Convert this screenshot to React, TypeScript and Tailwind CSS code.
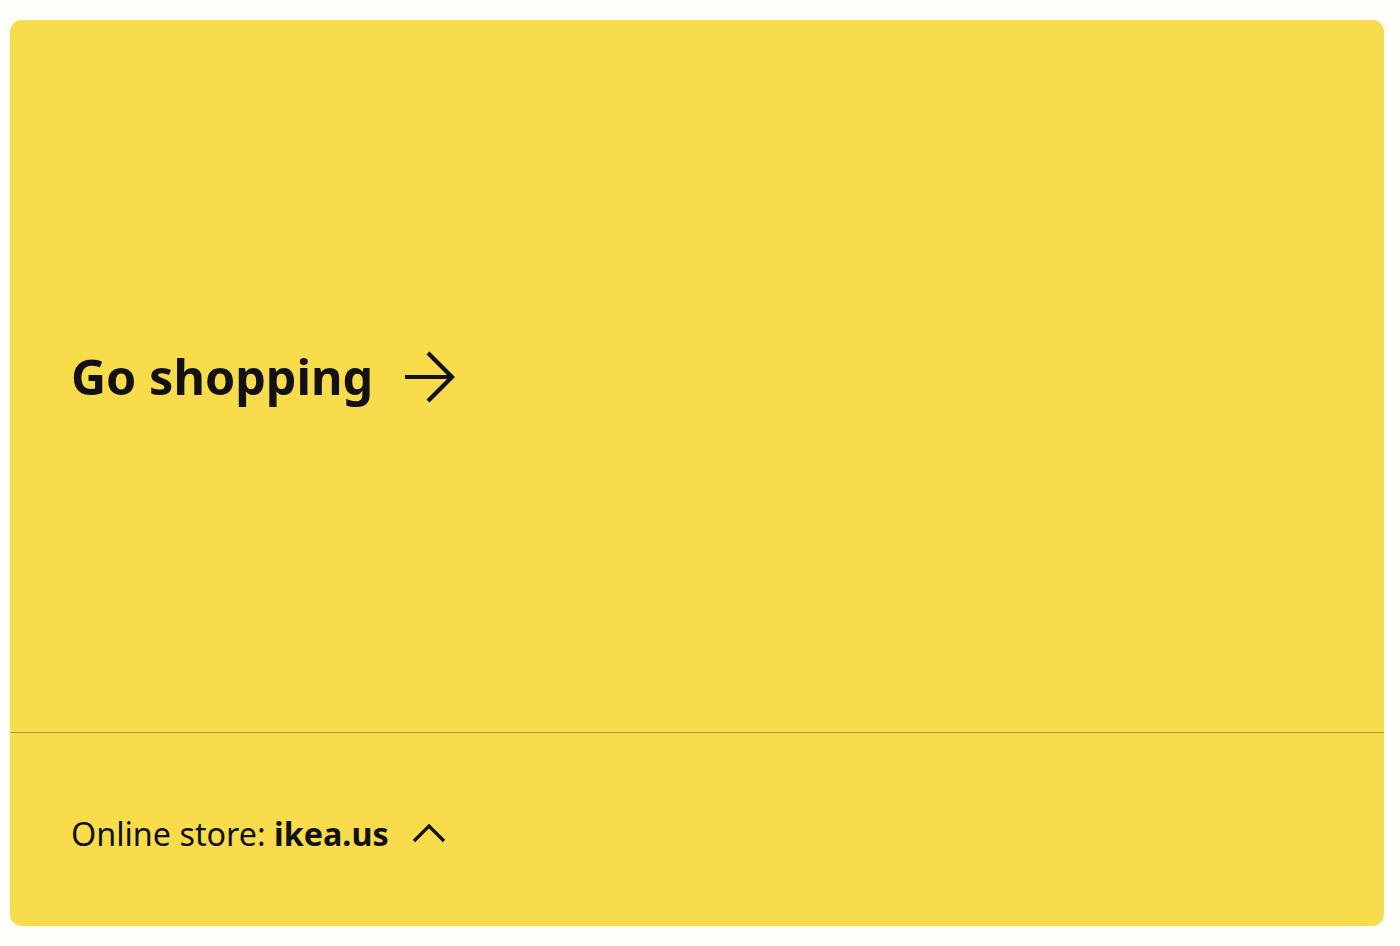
export default function App() {
  return (
    <div className="min-h-screen bg-[#fffefa] px-[10px] pt-[20px] pb-[20px] font-['Noto_Sans',sans-serif] text-[#111111]">
      <div className="flex h-[906px] w-[1374px] flex-col overflow-hidden rounded-[12px] bg-[#f8dc4b]">
        <a href="#" className="flex h-[713px] items-center gap-[31px] border-b border-[#a99a3e] pl-[61px]">
          <span className="text-[48.5px] font-bold leading-none">Go shopping</span>
          <svg width="52" height="52" viewBox="0 0 52 52" fill="none" stroke="currentColor" strokeWidth="4.2" className="mt-[2px]">
            <path d="M1 26h48" />
            <path d="M24 2l24 24-24 24" />
          </svg>
        </a>
        <div className="flex items-center gap-[23px] pl-[61px] pt-[84px]">
          <span className="text-[32.3px] leading-none">
            Online store: <span className="font-bold">ikea.us</span>
          </span>
          <svg width="34" height="22" viewBox="0 0 34 22" fill="none" stroke="currentColor" strokeWidth="3.2">
            <path d="M2 19L17 4l15 15" />
          </svg>
        </div>
      </div>
    </div>
  )
}
